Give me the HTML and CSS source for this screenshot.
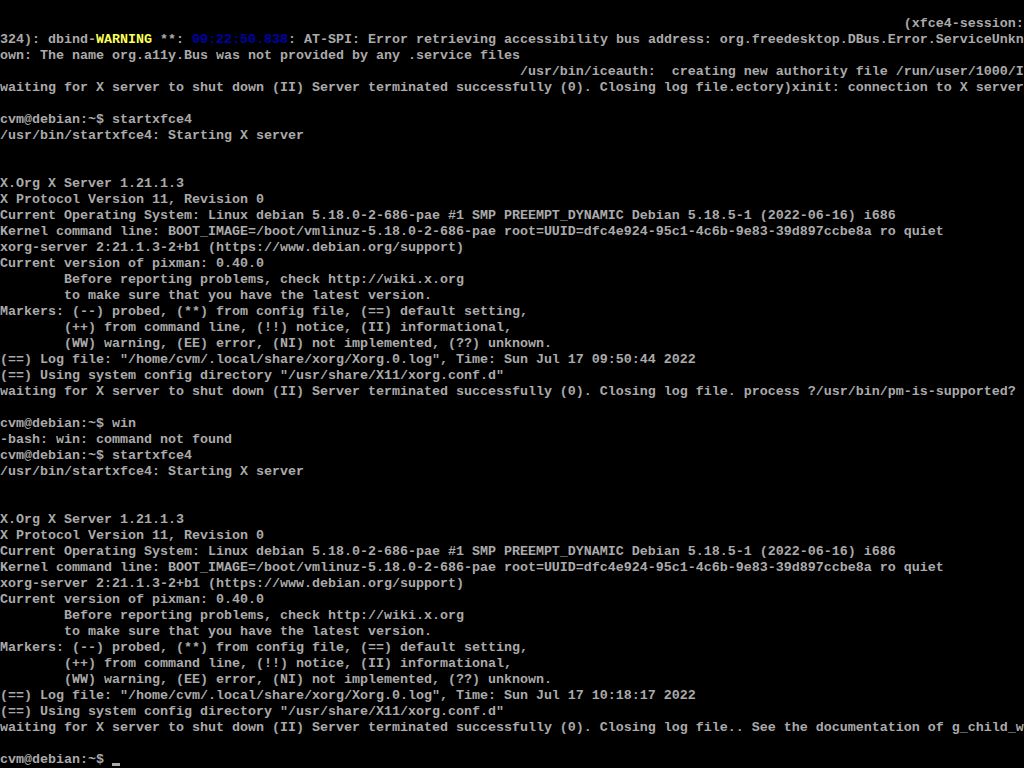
FILE: index.html
```html
<!DOCTYPE html>
<html>
<head>
<meta charset="utf-8">
<link rel="stylesheet" href="styles.css">
</head>
<body>
<pre class="console">

                                                                                                                 (xfce4-session:
324): dbind-<span class="warn">WARNING</span> **: <span class="ts">09:22:50.838</span>: AT-SPI: Error retrieving accessibility bus address: org.freedesktop.DBus.Error.ServiceUnkn
own: The name org.a11y.Bus was not provided by any .service files
                                                                 /usr/bin/iceauth:  creating new authority file /run/user/1000/I
waiting for X server to shut down (II) Server terminated successfully (0). Closing log file.ectory)xinit: connection to X server

cvm@debian:~$ startxfce4
/usr/bin/startxfce4: Starting X server


X.Org X Server 1.21.1.3
X Protocol Version 11, Revision 0
Current Operating System: Linux debian 5.18.0-2-686-pae #1 SMP PREEMPT_DYNAMIC Debian 5.18.5-1 (2022-06-16) i686
Kernel command line: BOOT_IMAGE=/boot/vmlinuz-5.18.0-2-686-pae root=UUID=dfc4e924-95c1-4c6b-9e83-39d897ccbe8a ro quiet
xorg-server 2:21.1.3-2+b1 (https://www.debian.org/support)
Current version of pixman: 0.40.0
        Before reporting problems, check http://wiki.x.org
        to make sure that you have the latest version.
Markers: (--) probed, (**) from config file, (==) default setting,
        (++) from command line, (!!) notice, (II) informational,
        (WW) warning, (EE) error, (NI) not implemented, (??) unknown.
(==) Log file: "/home/cvm/.local/share/xorg/Xorg.0.log", Time: Sun Jul 17 09:50:44 2022
(==) Using system config directory "/usr/share/X11/xorg.conf.d"
waiting for X server to shut down (II) Server terminated successfully (0). Closing log file. process ?/usr/bin/pm-is-supported?

cvm@debian:~$ win
-bash: win: command not found
cvm@debian:~$ startxfce4
/usr/bin/startxfce4: Starting X server


X.Org X Server 1.21.1.3
X Protocol Version 11, Revision 0
Current Operating System: Linux debian 5.18.0-2-686-pae #1 SMP PREEMPT_DYNAMIC Debian 5.18.5-1 (2022-06-16) i686
Kernel command line: BOOT_IMAGE=/boot/vmlinuz-5.18.0-2-686-pae root=UUID=dfc4e924-95c1-4c6b-9e83-39d897ccbe8a ro quiet
xorg-server 2:21.1.3-2+b1 (https://www.debian.org/support)
Current version of pixman: 0.40.0
        Before reporting problems, check http://wiki.x.org
        to make sure that you have the latest version.
Markers: (--) probed, (**) from config file, (==) default setting,
        (++) from command line, (!!) notice, (II) informational,
        (WW) warning, (EE) error, (NI) not implemented, (??) unknown.
(==) Log file: "/home/cvm/.local/share/xorg/Xorg.0.log", Time: Sun Jul 17 10:18:17 2022
(==) Using system config directory "/usr/share/X11/xorg.conf.d"
waiting for X server to shut down (II) Server terminated successfully (0). Closing log file.. See the documentation of g_child_w

cvm@debian:~$ <span class="cursor"></span></pre>
</body>
</html>
```
FILE: styles.css
```css
html, body {
  margin: 0;
  padding: 0;
  background: #000;
}
body {
  width: 1024px;
  height: 768px;
  overflow: hidden;
}
.console {
  margin: 0;
  padding: 0;
  font-family: "Liberation Mono", "DejaVu Sans Mono", monospace;
  font-size: 13.333px;
  line-height: 16px;
  font-weight: bold;
  color: #aaaaaa;
  white-space: pre;
  overflow: hidden;
  width: 1024px;
  height: 768px;
}
.warn {
  color: #ffff55;
}
.ts {
  color: #0000aa;
}
.cursor {
  display: inline-block;
  width: 8px;
  height: 16px;
  vertical-align: top;
  background: linear-gradient(to bottom, transparent 11px, #aaaaaa 11px, #aaaaaa 14px, transparent 14px);
}
```
